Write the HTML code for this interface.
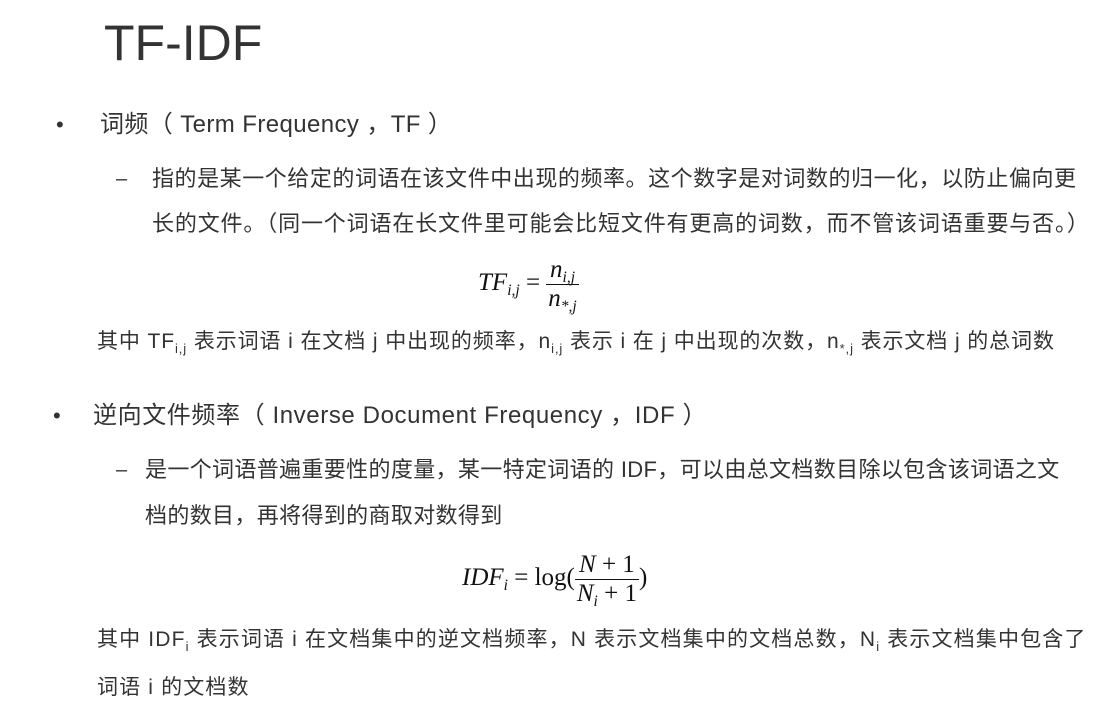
<!DOCTYPE html>
<html><head><meta charset="utf-8"><style>
body{margin:0;width:1120px;height:715px;background:#fff;position:relative;overflow:hidden;font-family:"Liberation Sans","Noto Sans CJK SC",sans-serif;color:#333;}
.l{position:absolute;white-space:nowrap;line-height:40px;height:40px;}
.m{font-family:"Liberation Serif",serif;font-style:italic;color:#111;}
.m *{white-space:nowrap;}
sub{font-size:62%;vertical-align:-5px;line-height:0}
.frac{display:inline-block;vertical-align:middle;text-align:center;}
.frac span.r{display:block;line-height:28px;padding:0 2px;}
.frac .num{border-bottom:1.5px solid #111;}
.n{font-style:normal}
</style></head><body>
<div class="l" style="left:104px;top:18px;font-size:50px;line-height:50px;height:50px;color:#333;">TF-IDF</div>

<div class="l" style="left:56px;top:105px;font-size:22px;">•</div>
<div class="l" style="left:100px;top:105px;font-size:24px;letter-spacing:0.4px;">词频（ Term Frequency ，TF ）</div>

<div class="l" style="left:116px;top:159px;font-size:20px;">–</div>
<div class="l" style="left:152px;top:159px;font-size:22px;letter-spacing:0.55px;">指的是某一个给定的词语在该文件中出现的频率。这个数字是对词数的归一化，以防止偏向更</div>
<div class="l" style="left:152px;top:204px;font-size:22px;letter-spacing:0.85px;">长的文件。（同一个词语在长文件里可能会比短文件有更高的词数，而不管该词语重要与否。）</div>

<div class="l m" style="left:478px;top:254px;font-size:25px;line-height:58px;height:58px;">TF<sub>i,j</sub> <span class="n">=</span> <span class="frac"><span class="r num">n<sub>i,j</sub></span><span class="r">n<sub>*,j</sub></span></span></div>

<div class="l" style="left:97px;top:322px;font-size:21px;letter-spacing:0.9px;">其中 TF<sub>i,j</sub> 表示词语 i 在文档 j 中出现的频率，n<sub>i,j</sub> 表示 i 在 j 中出现的次数，n<sub>*,j</sub> 表示文档 j 的总词数</div>

<div class="l" style="left:53px;top:396px;font-size:22px;">•</div>
<div class="l" style="left:93px;top:396px;font-size:24px;letter-spacing:0.6px;">逆向文件频率（ Inverse Document Frequency ，IDF ）</div>

<div class="l" style="left:116px;top:450px;font-size:20px;">–</div>
<div class="l" style="left:145px;top:450px;font-size:22px;letter-spacing:0.35px;">是一个词语普遍重要性的度量，某一特定词语的 IDF，可以由总文档数目除以包含该词语之文</div>
<div class="l" style="left:145px;top:496px;font-size:22px;letter-spacing:0.35px;">档的数目，再将得到的商取对数得到</div>

<div class="l m" style="left:462px;top:549px;font-size:25px;line-height:58px;height:58px;">IDF<sub>i</sub> <span class="n">= log(</span><span class="frac"><span class="r num">N <span class="n">+ 1</span></span><span class="r">N<sub>i</sub> <span class="n">+ 1</span></span></span><span class="n">)</span></div>

<div class="l" style="left:97px;top:620px;font-size:21px;letter-spacing:1.15px;">其中 IDF<sub>i</sub> 表示词语 i 在文档集中的逆文档频率，N 表示文档集中的文档总数，N<sub>i</sub> 表示文档集中包含了</div>
<div class="l" style="left:97px;top:668px;font-size:21px;letter-spacing:1.15px;">词语 i 的文档数</div>
</body></html>
